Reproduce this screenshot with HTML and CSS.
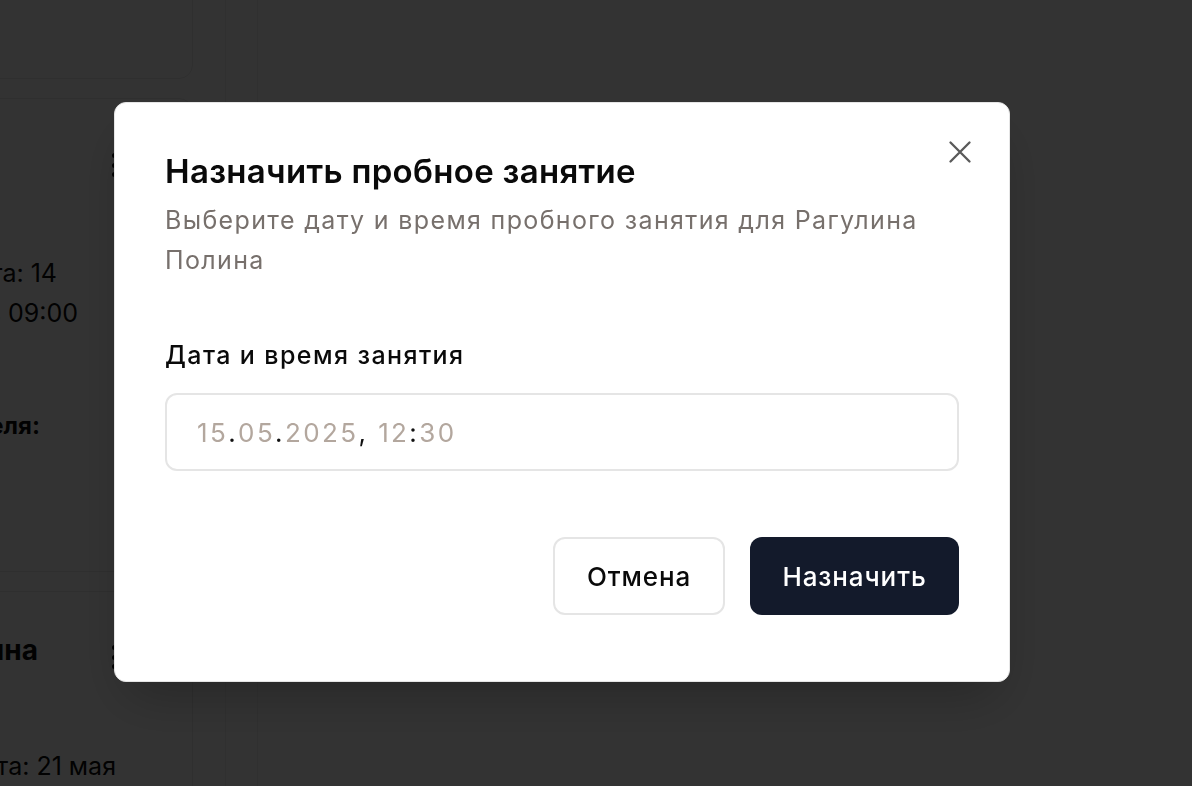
FILE: index.html
```html
<!DOCTYPE html>
<html lang="ru">
<head>
<meta charset="utf-8">
<title>Назначить пробное занятие</title>
<link rel="stylesheet" href="styles.css">
</head>
<body>
<div class="page">
  <div class="col">
    <div class="card card-top"></div>
    <div class="card card-mid">
      <div class="card-head">
        <span class="kebab"><i></i><i></i><i></i></span>
      </div>
      <div class="line l1">Дата: 14</div>
      <div class="line l2">мая 2025 в 09:00</div>
      <div class="line l3 bold">Комментарий преподавателя:</div>
    </div>
    <div class="card card-bot">
      <div class="card-head">
        <span class="name">Рагулина Полина</span>
        <span class="kebab"><i></i><i></i><i></i></span>
      </div>
      <div class="line l4">Дата: 21 мая</div>
    </div>
  </div>
  <div class="divider"></div>
</div>

<div class="overlay">
  <div class="modal" role="dialog">
    <button class="close" aria-label="Закрыть">
      <svg width="38" height="38" viewBox="0 0 24 24" fill="none" stroke="#5a5a5a" stroke-width="1.5" stroke-linecap="round"><path d="M18 6 6 18M6 6l12 12"/></svg>
    </button>
    <h2 class="title">Назначить пробное занятие</h2>
    <p class="desc">Выберите дату и время пробного занятия для Рагулина Полина</p>
    <div class="field">
      <label class="label">Дата и время занятия</label>
      <div class="input"><span class="d">15</span><span class="s">.</span><span class="d">05</span><span class="s">.</span><span class="d">2025</span><span class="s">, </span><span class="d">12</span><span class="s">:</span><span class="d">30</span></div>
    </div>
    <div class="footer">
      <button class="btn btn-outline">Отмена</button>
      <button class="btn btn-primary">Назначить</button>
    </div>
  </div>
</div>
</body>
</html>
```

FILE: styles.css
```css
* { box-sizing: border-box; }
html, body {
  margin: 0;
  padding: 0;
  width: 1192px;
  height: 786px;
  overflow: hidden;
  font-family: Inter, "Noto Sans", "Liberation Sans", sans-serif;
  background: #ffffff;
  color: #0a0a0a;
}

/* background page */
.page {
  display: flex;
  height: 786px;
  overflow: hidden;
}
.col {
  width: 443px;
  margin-left: -250px;
  margin-top: -120px;
  display: flex;
  flex-direction: column;
  gap: 19px;
  flex-shrink: 0;
}
.card {
  background: #ffffff;
  border: 1px solid #e9e9e9;
  border-radius: 14px;
  flex-shrink: 0;
}
.card-top { height: 199px; }
.card-mid { height: 474px; padding-top: 46px; }
.card-bot { height: 300px; padding-top: 45px; }
.card-head {
  display: flex;
  justify-content: flex-end;
  align-items: center;
  height: 40px;
  padding-right: 75px;
}
.name {
  font-size: 28px;
  font-weight: 700;
  white-space: nowrap;
  flex-shrink: 0;
  margin-right: 74px;
  margin-top: -14px;
}
.kebab {
  display: flex;
  flex-direction: column;
  gap: 4.5px;
  width: 5px;
  flex-shrink: 0;
}
.kebab i {
  display: block;
  width: 5px;
  height: 5px;
  border-radius: 50%;
  background: #0a0a0a;
}
.line {
  display: flex;
  justify-content: flex-end;
  font-size: 25px;
  line-height: 40px;
  white-space: nowrap;
}
.l1 { margin-top: 68px; padding-right: 135px; }
.l2 { padding-right: 114px; }
.l3 { margin-top: 73px; padding-right: 152px; font-size: 24px; }
.l4 { margin-top: 69px; padding-right: 76px; }
.bold { font-weight: 700; }
.divider {
  width: 33px;
  margin-left: 32px;
  border-left: 1px solid #f0f0f0;
  border-right: 1px solid #f0f0f0;
  flex-shrink: 0;
}

/* overlay + modal */
.overlay {
  position: fixed;
  inset: 0;
  background: rgba(0, 0, 0, 0.8);
  display: flex;
  align-items: flex-start;
  padding: 102px 0 0 114px;
}
.modal {
  position: relative;
  width: 896px;
  height: 580px;
  background: #ffffff;
  border: 1px solid #e5e5e5;
  border-radius: 12px;
  padding: 50px 50px 66px 50px;
  display: flex;
  flex-direction: column;
  box-shadow: 0 25px 50px -12px rgba(0, 0, 0, 0.25);
}
.close {
  position: absolute;
  top: 30px;
  right: 30px;
  width: 38px;
  height: 38px;
  padding: 0;
  border: 0;
  background: transparent;
  display: flex;
}
.title {
  margin: 0;
  font-size: 33px;
  line-height: 36px;
  font-weight: 600;
  letter-spacing: 0.3px;
  color: #0a0a0a;
}
.desc {
  margin: 11px 0 0 0;
  font-size: 25px;
  line-height: 40px;
  letter-spacing: 1.35px;
  color: #77706c;
  max-width: 790px;
}
.field {
  margin-top: 57px;
  display: flex;
  flex-direction: column;
  gap: 20px;
}
.label {
  font-size: 25px;
  line-height: 36px;
  font-weight: 500;
  letter-spacing: 1.4px;
  color: #0a0a0a;
}
.input {
  height: 78px;
  border: 2px solid #e5e5e5;
  border-radius: 12px;
  padding: 0 30px;
  display: flex;
  align-items: center;
  font-size: 26px;
  letter-spacing: 2.4px;
  white-space: pre;
}
.input .d { color: #b3a79e; }
.input .s { color: #111111; }
.footer {
  margin-top: auto;
  display: flex;
  justify-content: flex-end;
  gap: 25px;
}
.btn {
  height: 78px;
  border-radius: 12px;
  font-family: inherit;
  font-size: 26px;
  font-weight: 500;
  letter-spacing: 0.9px;
  padding: 0;
  cursor: pointer;
}
.btn-outline {
  width: 172px;
  background: #ffffff;
  border: 2px solid #e5e5e5;
  color: #0a0a0a;
}
.btn-primary {
  width: 209px;
  background: #131a2b;
  border: 0;
  color: #ffffff;
}
```
